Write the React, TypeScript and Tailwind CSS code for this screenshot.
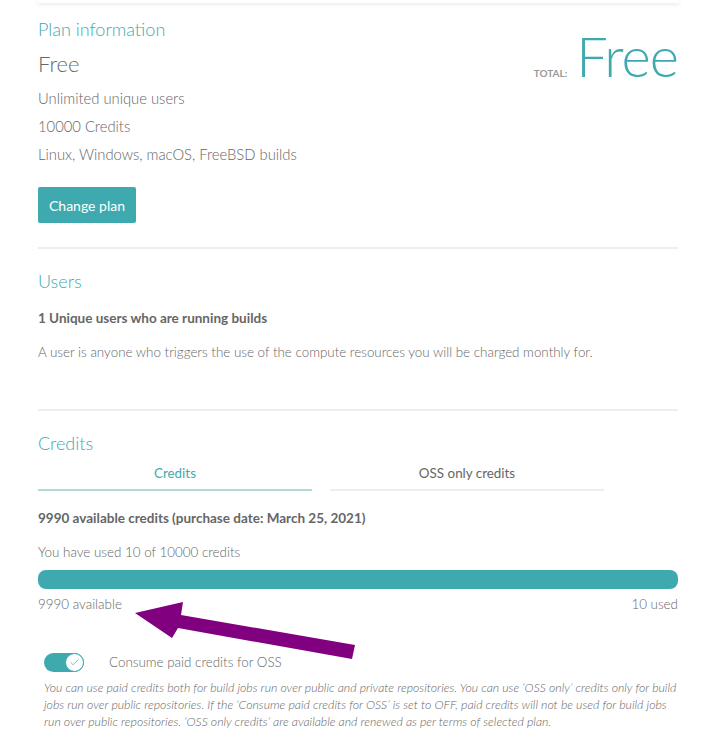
import { Check } from "lucide-react";

const font = { fontFamily: "Lato, 'Open Sans', sans-serif" };

const Section = ({ title, children }: { title: string; children: React.ReactNode }) => (
  <div>
    <h2 className="text-[18px] font-light text-[#3eaaaf] leading-[24px]">{title}</h2>
    {children}
  </div>
);

const App = () => {
  return (
    <div className="relative min-h-[755px] bg-white text-[#666]" style={font}>
      <div className="ml-[38px] mr-[28px] h-[3px] bg-white shadow-[0_1px_4px_rgba(0,0,0,0.12)]" />

      <div className="ml-[38px] mr-[29px] pt-[14px]">
        {/* plan */}
        <div className="flex justify-between">
          <Section title="Plan information">
            <div className="mt-[8px] text-[22px] font-light text-[#666] leading-[30px]">Free</div>
            <div className="mt-[9px] flex flex-col gap-[8px] text-[14.8px] font-light leading-[20px]">
              <span>Unlimited unique users</span>
              <span>10000 Credits</span>
              <span>Linux, Windows, macOS, FreeBSD builds</span>
            </div>
            <button className="mt-[23px] h-[36px] rounded-[2px] bg-[#3eaaaf] px-[11px] text-[14px] text-white">
              Change plan
            </button>
          </Section>
          <div className="flex items-baseline gap-[9px] pt-[9px]">
            <span className="text-[10px] font-bold text-[#999]">TOTAL:</span>
            <span className="text-[56px] font-light leading-[60px] tracking-[-1px] text-[#3eaaaf]">Free</span>
          </div>
        </div>

        <div className="mt-[24px] h-[2px] bg-[#eee]" />

        <div className="pt-[20px]">
          <Section title="Users">
            <p className="mt-[15px] text-[13.5px] font-bold text-[#666] leading-[20px]">
              1 Unique users who are running builds
            </p>
            <p className="mt-[14px] text-[13.4px] font-light leading-[20px]">
              A user is anyone who triggers the use of the compute resources you will be charged monthly for.
            </p>
          </Section>
        </div>

        <div className="mt-[47px] h-[2px] bg-[#eee]" />

        <div className="pt-[20px]">
          <Section title="Credits">
            <div className="mt-[8px] flex gap-[18px] pr-[74px]">
              <div className="flex-1 border-b-2 border-[#b5d8da] pb-[6px] text-center text-[13.4px] leading-[20px] text-[#3eaaaf]">
                Credits
              </div>
              <div className="flex-1 border-b-2 border-[#eee] pb-[6px] text-center text-[13.4px] leading-[20px] text-[#666]">
                OSS only credits
              </div>
            </div>
            <p className="mt-[17px] text-[13.5px] font-bold text-[#666] leading-[20px]">
              9990 available credits (purchase date: March 25, 2021)
            </p>
            <p className="mt-[14px] text-[13.4px] font-light leading-[20px]">You have used 10 of 10000 credits</p>
            <div className="mt-[8px] h-[19px] rounded-[8px] bg-[#3eaaaf]" />
            <div className="mt-[5px] flex justify-between text-[13.4px] font-light leading-[20px]">
              <span>9990 available</span>
              <span>10 used</span>
            </div>
          </Section>

          <div className="mt-[38px] flex items-center gap-[25px] pl-[6px]">
            <div className="flex h-[19px] w-[40px] items-center justify-end rounded-full bg-[#3eaaaf]">
              <div className="flex h-[19px] w-[19px] items-center justify-center rounded-full border border-[#3eaaaf] bg-white">
                <Check size={11} strokeWidth={1.5} className="text-[#3eaaaf]" />
              </div>
            </div>
            <span className="text-[13.4px] font-light leading-[20px]">Consume paid credits for OSS</span>
          </div>

          <p className="mt-[7px] pl-[6px] text-[12.3px] font-light italic leading-[17px] text-[#666]">
            You can use paid credits both for build jobs run over public and private repositories. You can use
            {" \u2018"}OSS only{"\u2019"} credits only for build jobs run over public repositories. If the {"\u2018"}Consume
            paid credits for OSS{"\u2019"} is set to OFF, paid credits will not be used for build jobs run over public
            repositories. {"\u2018"}OSS only credits{"\u2019"} are available and renewed as per terms of selected plan.
          </p>
        </div>
      </div>

      {/* annotation arrow */}
      <svg className="pointer-events-none absolute left-0 top-0" width="707" height="755">
        <polygon
          points="135,613 183,602 181,615 355,645 352,659 178,628 172,638"
          fill="#800080"
        />
      </svg>
    </div>
  );
};

export default App;
